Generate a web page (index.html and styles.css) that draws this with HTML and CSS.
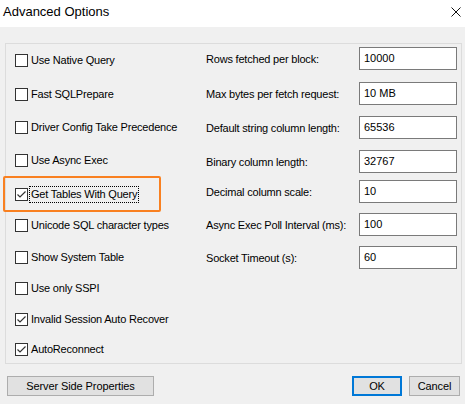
FILE: index.html
```html
<!DOCTYPE html>
<html>
<head>
<meta charset="utf-8">
<link rel="stylesheet" href="styles.css">
</head>
<body>
<div class="window">
  <div class="titlebar">
    <span class="title">Advanced Options</span>
    <svg class="close" width="10" height="10" viewBox="0 0 10 10"><path d="M0.5 0.5 L9.5 9.5 M9.5 0.5 L0.5 9.5" stroke="#111" stroke-width="1" fill="none"/></svg>
  </div>
  <div class="content">
    <div class="group">
      <div class="checks">
        <label class="check"><span class="box"></span><span class="text">Use Native Query</span></label>
        <label class="check"><span class="box"></span><span class="text">Fast SQLPrepare</span></label>
        <label class="check"><span class="box"></span><span class="text">Driver Config Take Precedence</span></label>
        <label class="check"><span class="box"></span><span class="text">Use Async Exec</span></label>
        <label class="check"><span class="box checked"><svg viewBox="0 0 13 13" width="13" height="13"><path d="M2.5 6.5 L5 9 L10.5 3.5" stroke="#333" stroke-width="1.2" fill="none"/></svg></span><span class="text focus">Get Tables With Query</span></label>
        <label class="check"><span class="box"></span><span class="text">Unicode SQL character types</span></label>
        <label class="check"><span class="box"></span><span class="text">Show System Table</span></label>
        <label class="check"><span class="box"></span><span class="text">Use only SSPI</span></label>
        <label class="check"><span class="box checked"><svg viewBox="0 0 13 13" width="13" height="13"><path d="M2.5 6.5 L5 9 L10.5 3.5" stroke="#333" stroke-width="1.2" fill="none"/></svg></span><span class="text">Invalid Session Auto Recover</span></label>
        <label class="check"><span class="box checked"><svg viewBox="0 0 13 13" width="13" height="13"><path d="M2.5 6.5 L5 9 L10.5 3.5" stroke="#333" stroke-width="1.2" fill="none"/></svg></span><span class="text">AutoReconnect</span></label>
      </div>
      <div class="fields">
        <span class="lbl">Rows fetched per block:</span><span class="inp">10000</span>
        <span class="lbl">Max bytes per fetch request:</span><span class="inp">10 MB</span>
        <span class="lbl">Default string column length:</span><span class="inp">65536</span>
        <span class="lbl">Binary column length:</span><span class="inp">32767</span>
        <span class="lbl">Decimal column scale:</span><span class="inp">10</span>
        <span class="lbl">Async Exec Poll Interval (ms):</span><span class="inp">100</span>
        <span class="lbl">Socket Timeout (s):</span><span class="inp">60</span>
      </div>
    </div>
    <div class="footer">
      <button class="btn server">Server Side Properties</button>
      <div class="spacer"></div>
      <button class="btn ok">OK</button>
      <button class="btn cancel">Cancel</button>
    </div>
  </div>
  <div class="highlight"></div>
</div>
</body>
</html>
```
FILE: styles.css
```css
html, body {
  margin: 0;
  padding: 0;
}
body {
  width: 465px;
  height: 404px;
  background: #f0f0f0;
  font-family: "Liberation Sans", Arial, sans-serif;
  font-size: 11px;
  color: #000;
  overflow: hidden;
}
.window {
  position: relative;
  width: 465px;
  height: 404px;
}
.titlebar {
  height: 27px;
  box-sizing: border-box;
  background: #fff;
  display: flex;
  align-items: flex-start;
  padding: 4px 4px 0 3px;
}
.title {
  font-size: 13px;
  line-height: 15px;
  flex: 1;
}
.close {
  margin-top: 3px;
  margin-right: 0;
}
.content {
  padding: 16px 3px 0 5px;
}
.group {
  height: 321px;
  box-sizing: border-box;
  border: 1px solid #dcdcdc;
  display: grid;
  grid-template-columns: 191px 251px;
  padding-left: 9px;
}
.checks {
  display: grid;
  grid-template-rows: 34px 33px 33px 34px 31px 32px 31px 31px 30px 13px;
  padding-top: 10px;
}
.check {
  display: flex;
  align-items: center;
  height: 13px;
  letter-spacing: -0.2px;
  white-space: nowrap;
}
.box {
  width: 13px;
  height: 13px;
  box-sizing: border-box;
  border: 1px solid #333;
  background: #fff;
  flex: none;
  position: relative;
}
.box svg {
  position: absolute;
  left: -1px;
  top: -1px;
}
.text {
  margin-left: 2px;
  padding: 1px 1px 2px 1px;
  line-height: 12px;
}
.text.focus {
  outline: 1px dotted #000;
  outline-offset: 0;
}
.fields {
  display: grid;
  grid-template-columns: 153px 98px;
  grid-template-rows: 35px 34px 34px 30px 33px 33px 23px;
  padding-top: 3px;
  align-items: start;
}
.lbl {
  padding-top: 6px;
  letter-spacing: -0.2px;
  white-space: nowrap;
}
.inp {
  height: 23px;
  box-sizing: border-box;
  border: 1px solid #7a7a7a;
  background: #fff;
  padding: 4px 4px 0 4px;
  line-height: 12px;
}
.footer {
  display: flex;
  margin-top: 12px;
  padding-left: 2px;
  padding-right: 2px;
}
.spacer {
  flex: 1;
}
.btn {
  height: 20px;
  box-sizing: border-box;
  background: #e1e1e1;
  border: 1px solid #adadad;
  font-family: "Liberation Sans", Arial, sans-serif;
  font-size: 11px;
  letter-spacing: -0.1px;
  color: #000;
  padding: 0;
  margin: 0;
}
.server {
  width: 147px;
}
.ok {
  width: 50px;
  border: 2px solid #0078d7;
}
.cancel {
  width: 51px;
  margin-left: 7px;
}
.highlight {
  position: absolute;
  left: 3px;
  top: 176px;
  width: 158px;
  height: 36px;
  box-sizing: border-box;
  border: 2px solid #f98020;
  border-radius: 2px;
}
```
